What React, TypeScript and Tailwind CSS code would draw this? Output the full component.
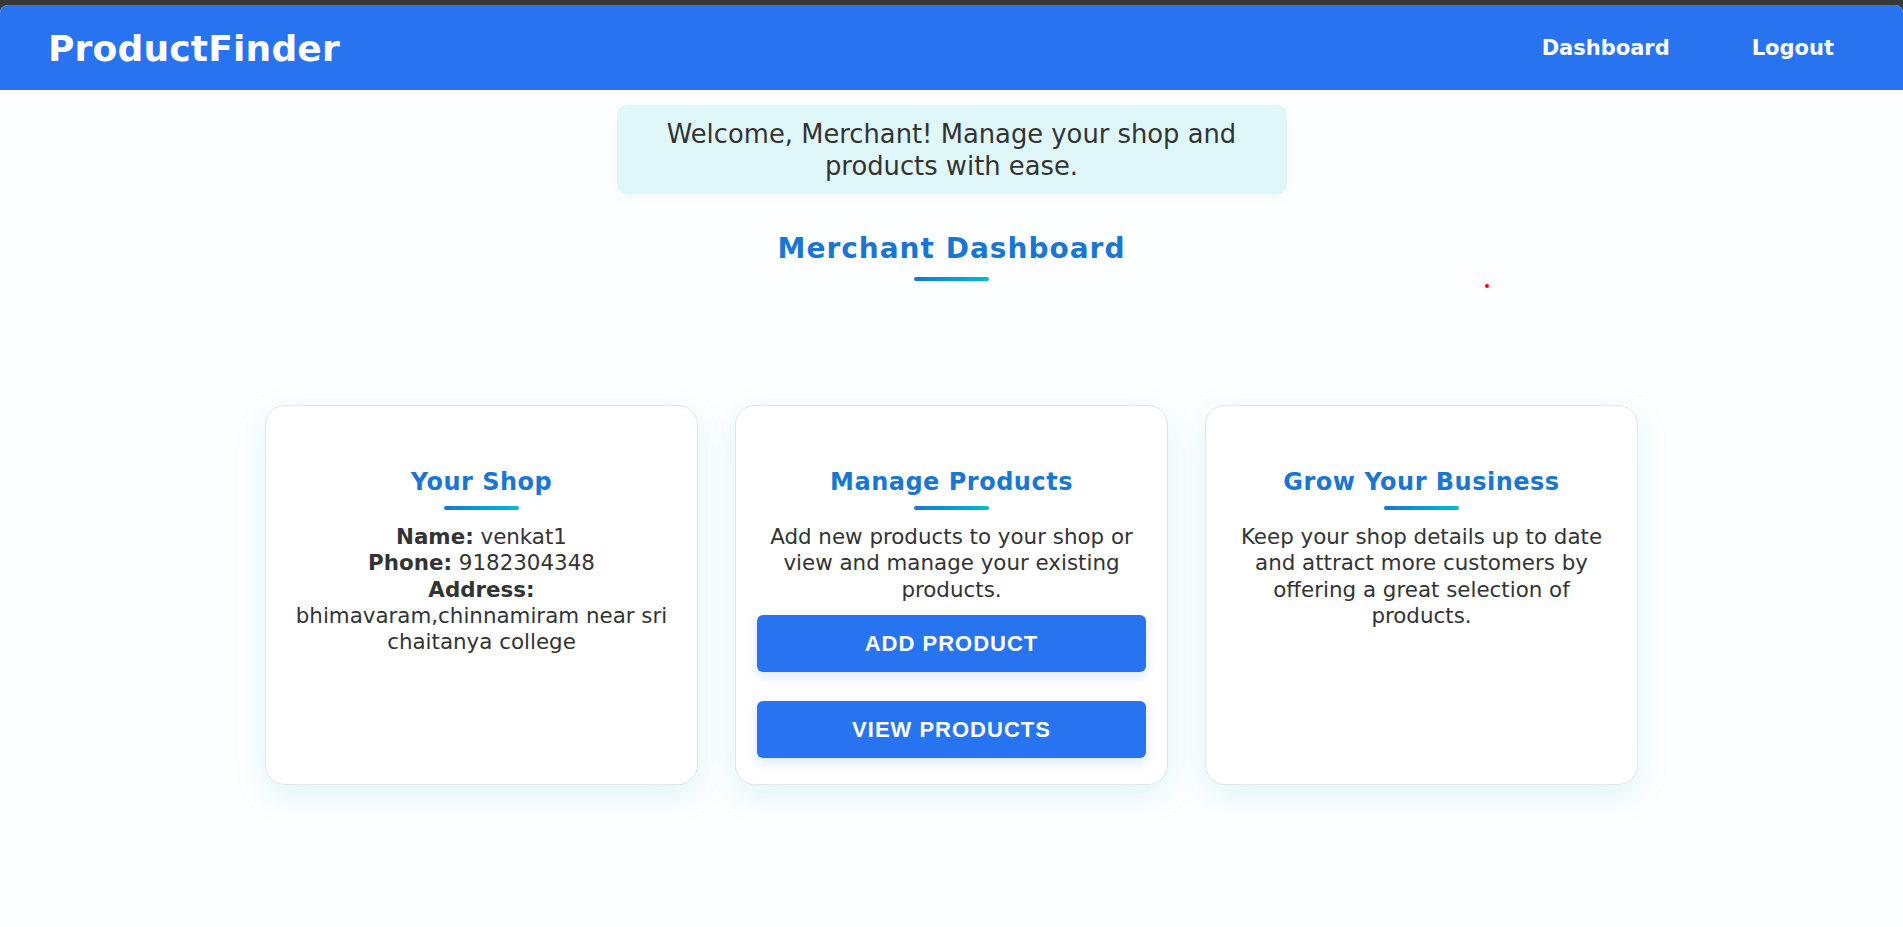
import React from "react";

const Underline = ({ className = "" }: { className?: string }) => (
  <div className={`w-[75px] h-[4px] rounded-full bg-linear-to-r from-[#1976d2] to-[#00bcd4] ${className}`} />
);

const CardTitle = ({ children }: { children: React.ReactNode }) => (
  <>
    <h2 className="text-[24px] leading-[30px] font-bold tracking-[0.5px] text-[#1976d2]">{children}</h2>
    <Underline className="mt-[9px]" />
  </>
);

const Card = ({ children }: { children: React.ReactNode }) => (
  <div className="w-[433px] h-[380px] rounded-[20px] border border-[#e3e6e8] bg-white px-[21px] pt-[61px] flex flex-col items-center text-center shadow-[0_10px_32px_rgba(0,188,212,0.13)]">
    {children}
  </div>
);

const Btn = ({ children, className = "" }: { children: React.ReactNode; className?: string }) => (
  <button
    className={`w-full h-[57px] rounded-[6px] bg-[#2874f0] text-white font-bold text-[22px] tracking-[1px] font-['Liberation_Sans',Arial,sans-serif] shadow-[0_4px_12px_rgba(40,116,240,0.18)] ${className}`}
  >
    {children}
  </button>
);

export default function App() {
  return (
    <div className="relative min-h-screen bg-[#383838] pt-[5px] font-['DejaVu_Sans',sans-serif]">
      <div className="min-h-[922px] bg-[#fdfeff] rounded-t-[8px] overflow-hidden">
        <nav className="h-[85px] bg-[#2874f0] flex items-center justify-between pl-[48px] pr-[69px]">
          <span className="text-white font-bold text-[36px] leading-none tracking-[0.2px] pt-[2px]">ProductFinder</span>
          <div className="flex items-center gap-[82px] text-white font-bold text-[21px] pt-[2px]">
            <a>Dashboard</a>
            <a>Logout</a>
          </div>
        </nav>

        <main className="flex flex-col items-center">
          <div className="mt-[15px] w-[670px] h-[89px] rounded-[10px] bg-[#e0f7fa] flex items-center justify-center text-center text-[25.8px] leading-[32px] text-[#333] shadow-[0_4px_14px_rgba(0,0,0,0.04)]">
            <p>
              Welcome, Merchant! Manage your shop and
              <br />
              products with ease.
            </p>
          </div>

          <h1 className="mt-[38px] text-[28px] leading-[34px] font-bold tracking-[1px] text-[#1976d2]">
            Merchant Dashboard
          </h1>
          <Underline className="mt-[11px]" />

          <div className="mt-[124px] flex gap-[37px]">
            <Card>
              <CardTitle>Your Shop</CardTitle>
              <div className="mt-[14px] text-[21.4px] leading-[26.3px] text-[#333]">
                <p>
                  <b>Name:</b> venkat1
                </p>
                <p>
                  <b>Phone:</b> 9182304348
                </p>
                <p>
                  <b>Address:</b>
                  <br />
                  bhimavaram,chinnamiram near sri
                  <br />
                  chaitanya college
                </p>
              </div>
            </Card>

            <Card>
              <CardTitle>Manage Products</CardTitle>
              <p className="mt-[14px] text-[21.4px] leading-[26.3px] text-[#333]">
                Add new products to your shop or
                <br />
                view and manage your existing
                <br />
                products.
              </p>
              <Btn className="mt-[12px]">ADD PRODUCT</Btn>
              <Btn className="mt-[29px]">VIEW PRODUCTS</Btn>
            </Card>

            <Card>
              <CardTitle>Grow Your Business</CardTitle>
              <p className="mt-[14px] text-[21.4px] leading-[26.3px] text-[#333]">
                Keep your shop details up to date
                <br />
                and attract more customers by
                <br />
                offering a great selection of
                <br />
                products.
              </p>
            </Card>
          </div>
        </main>
      </div>
      <div className="absolute left-[1485px] top-[284px] w-[4px] h-[4px] rounded-full bg-[#ff0000]" />
    </div>
  );
}
